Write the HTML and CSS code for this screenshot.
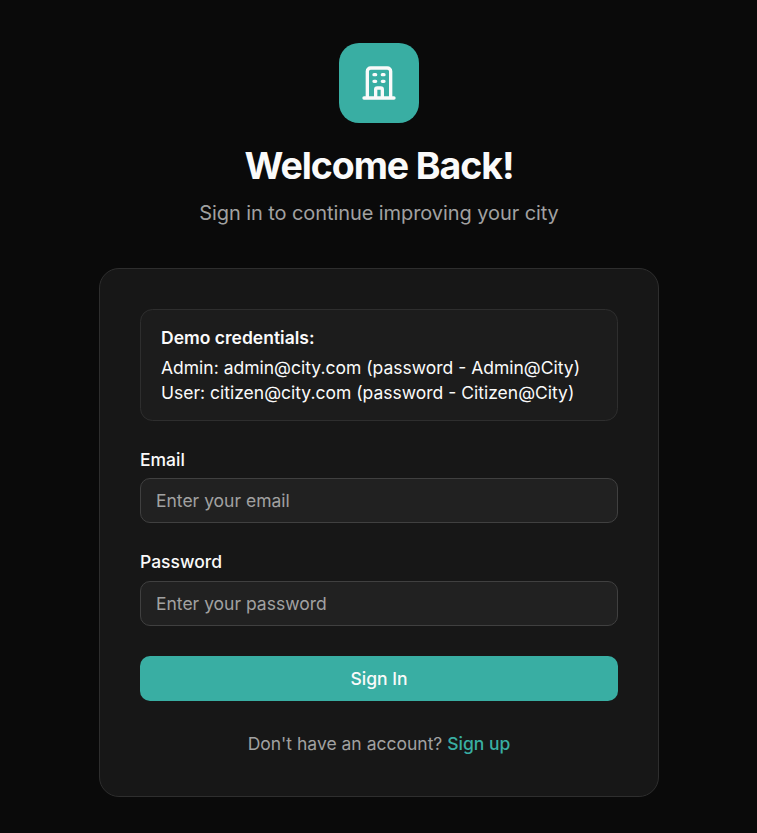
FILE: index.html
```html
<!DOCTYPE html>
<html lang="en">
<head>
<meta charset="utf-8">
<title>Sign In</title>
<link rel="stylesheet" href="styles.css">
</head>
<body>
<main class="page">
  <header class="header">
    <div class="logo">
      <svg viewBox="0 0 24 24" fill="none" stroke="currentColor" stroke-width="2" stroke-linecap="round" stroke-linejoin="round" aria-hidden="true">
        <path d="M19 21V5a2 2 0 00-2-2H7a2 2 0 00-2 2v16m14 0h2m-2 0h-5m-9 0H3m2 0h5M9 7h1m-1 4h1m4-4h1m-1 4h1m-5 10v-5a1 1 0 011-1h2a1 1 0 011 1v5m-4 0h4"/>
      </svg>
    </div>
    <h1 class="title">Welcome Back!</h1>
    <p class="subtitle">Sign in to continue improving your city</p>
  </header>
  <section class="card">
    <div class="demo">
      <p class="demo-title">Demo credentials:</p>
      <p>Admin: admin@city.com (password - Admin@City)</p>
      <p>User: citizen@city.com (password - Citizen@City)</p>
    </div>
    <form class="form">
      <div class="field">
        <label for="email">Email</label>
        <input id="email" type="email" placeholder="Enter your email">
      </div>
      <div class="field">
        <label for="password">Password</label>
        <input id="password" type="password" placeholder="Enter your password">
      </div>
      <button class="submit" type="button">Sign In</button>
    </form>
    <p class="signup">Don't have an account? <a href="#">Sign up</a></p>
  </section>
</main>
</body>
</html>
```
FILE: styles.css
```css
* {
  box-sizing: border-box;
  margin: 0;
}

body {
  padding-left: 1px;
  background: #0a0a0a;
  color: #fafafa;
  font: 17.5px/25px Inter, "Liberation Sans", sans-serif;
}

.page {
  width: 560px;
  margin: 0 auto;
  padding-top: 42.8px;
}

.header {
  display: flex;
  flex-direction: column;
  align-items: center;
  margin-bottom: 40px;
}

.logo {
  display: grid;
  place-items: center;
  width: 80px;
  height: 80px;
  margin-bottom: 20px;
  border-radius: 20px;
  background: #39aea3;
}

.logo svg {
  width: 40px;
  height: 40px;
}

.title {
  margin-bottom: 10px;
  font-size: 37.5px;
  font-weight: 700;
  line-height: 45px;
  letter-spacing: -1.09px;
}

.subtitle {
  color: #a1a1a1;
  font-size: 20px;
  line-height: 30px;
  letter-spacing: -0.08px;
}

.card {
  display: flex;
  flex-direction: column;
  gap: 30px;
  padding: 40px;
  border: 1px solid #2e2e2e;
  border-radius: 20px;
  background: #171717;
}

.demo {
  padding: 15px 20px;
  border: 1px solid #2e2e2e;
  border-radius: 12.5px;
  background: #1c1c1c;
}

.demo-title {
  margin-bottom: 5px;
  font-weight: 600;
}

.form {
  display: flex;
  flex-direction: column;
  gap: 30px;
}

.field {
  display: flex;
  flex-direction: column;
  gap: 10px;
}

label {
  font-weight: 500;
  line-height: 17.5px;
}

input {
  width: 100%;
  height: 45px;
  padding: 5px 15px;
  border: 1px solid #404040;
  border-radius: 10px;
  background: #212121;
  color: inherit;
  font: inherit;
}

input::placeholder {
  color: #a1a1a1;
}

.submit {
  height: 45px;
  border: 0;
  border-radius: 10px;
  background: #39aea3;
  color: #fafafa;
  font: inherit;
  font-weight: 500;
}

.signup {
  color: #a1a1a1;
  text-align: center;
}

.signup a {
  color: #39aea3;
  font-weight: 500;
  text-decoration: none;
}
```
